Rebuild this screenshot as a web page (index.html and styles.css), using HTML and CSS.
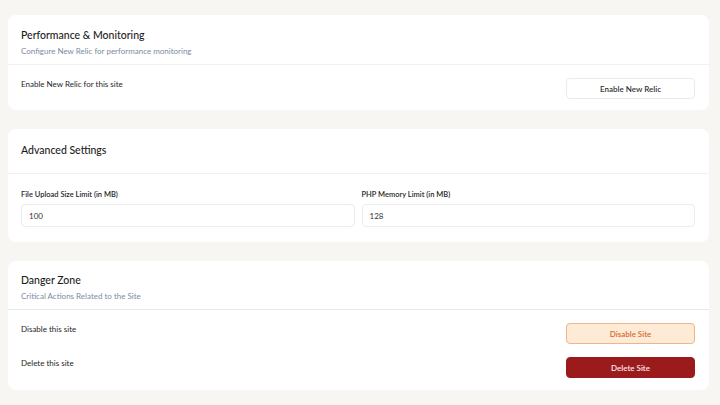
FILE: index.html
```html
<!DOCTYPE html>
<html lang="en">
<head>
    <meta charset="UTF-8">
    <meta name="viewport" content="width=device-width, initial-scale=1.0">
    <title>Site Settings</title>
    <link rel="stylesheet" href="styles.css">
</head>
<body>
    <div class="page">
        <section class="card">
            <div class="card-head">
                <h2>Performance &amp; Monitoring</h2>
                <p class="sub">Configure New Relic for performance monitoring</p>
            </div>
            <div class="card-body">
                <div class="row">
                    <span class="label">Enable New Relic for this site</span>
                    <button class="btn btn-plain">Enable New Relic</button>
                </div>
            </div>
        </section>

        <section class="card">
            <div class="card-head head-only">
                <h2>Advanced Settings</h2>
            </div>
            <div class="card-body fields">
                <div class="field">
                    <label>File Upload Size Limit (in MB)</label>
                    <input type="text" value="100">
                </div>
                <div class="field">
                    <label>PHP Memory Limit (in MB)</label>
                    <input type="text" value="128">
                </div>
            </div>
        </section>

        <section class="card">
            <div class="card-head danger-head">
                <h2>Danger Zone</h2>
                <p class="sub">Critical Actions Related to the Site</p>
            </div>
            <div class="card-body danger-body">
                <div class="row">
                    <span class="label">Disable this site</span>
                    <button class="btn btn-warn">Disable Site</button>
                </div>
                <div class="row">
                    <span class="label">Delete this site</span>
                    <button class="btn btn-danger">Delete Site</button>
                </div>
            </div>
        </section>
    </div>
</body>
</html>
```

FILE: styles.css
```css
body {
    margin: 0;
    background: #f8f6f2;
    font-family: Lato, "Noto Sans", sans-serif;
    color: #262626;
}
.page {
    padding: 15px 11px 15px 8px;
    display: flex;
    flex-direction: column;
    gap: 19px;
}
.card {
    background: #fff;
    border-radius: 8px;
}
.card-head {
    padding: 12px 13px 0 13px;
    height: 37px;
    border-bottom: 1px solid #f1f1f1;
}
.card-head.head-only {
    height: 31px;
    padding-top: 13px;
}
.card-head.danger-head {
    height: 37px;
    padding-top: 11px;
    border-bottom-color: #e3e8f1;
}
.card-head h2 {
    margin: 0;
    font-size: 10.5px;
    font-weight: 500;
    line-height: 16px;
    color: #1c1c1c;
}
.card-head .sub {
    margin: 2px 0 0;
    font-size: 8px;
    line-height: 12px;
    color: #7c8ba5;
}
.card-body {
    padding: 13px 14px 11px 13px;
}
.row {
    display: flex;
    justify-content: space-between;
    align-items: flex-start;
}
.label {
    font-size: 8px;
    line-height: 12px;
    color: #262626;
}
.btn {
    width: 129px;
    height: 21px;
    border-radius: 4px;
    font-family: inherit;
    font-size: 8px;
    font-weight: 600;
    cursor: pointer;
}
.btn-plain {
    background: #fff;
    border: 1px solid #ebebeb;
    color: #333;
}
.btn-warn {
    background: #feebd6;
    border: 1px solid #f2b48c;
    color: #d66a2e;
}
.btn-danger {
    background: #9b1b1d;
    border: 1px solid #9b1b1d;
    color: #fbeaea;
}
.fields {
    display: grid;
    grid-template-columns: 1fr 1fr;
    gap: 7px;
    padding: 15px 14px 15px 13px;
}
.field label {
    display: block;
    font-size: 7.5px;
    font-weight: 600;
    line-height: 12px;
    color: #262626;
    margin-bottom: 3px;
}
.field input {
    display: block;
    box-sizing: border-box;
    width: 100%;
    height: 23px;
    padding: 0 7px;
    border: 1px solid #ececec;
    border-radius: 4px;
    font-family: inherit;
    font-size: 8px;
    color: #333;
}
.danger-body {
    display: flex;
    flex-direction: column;
    gap: 13px;
    padding-top: 13px;
    padding-bottom: 12px;
}
```
